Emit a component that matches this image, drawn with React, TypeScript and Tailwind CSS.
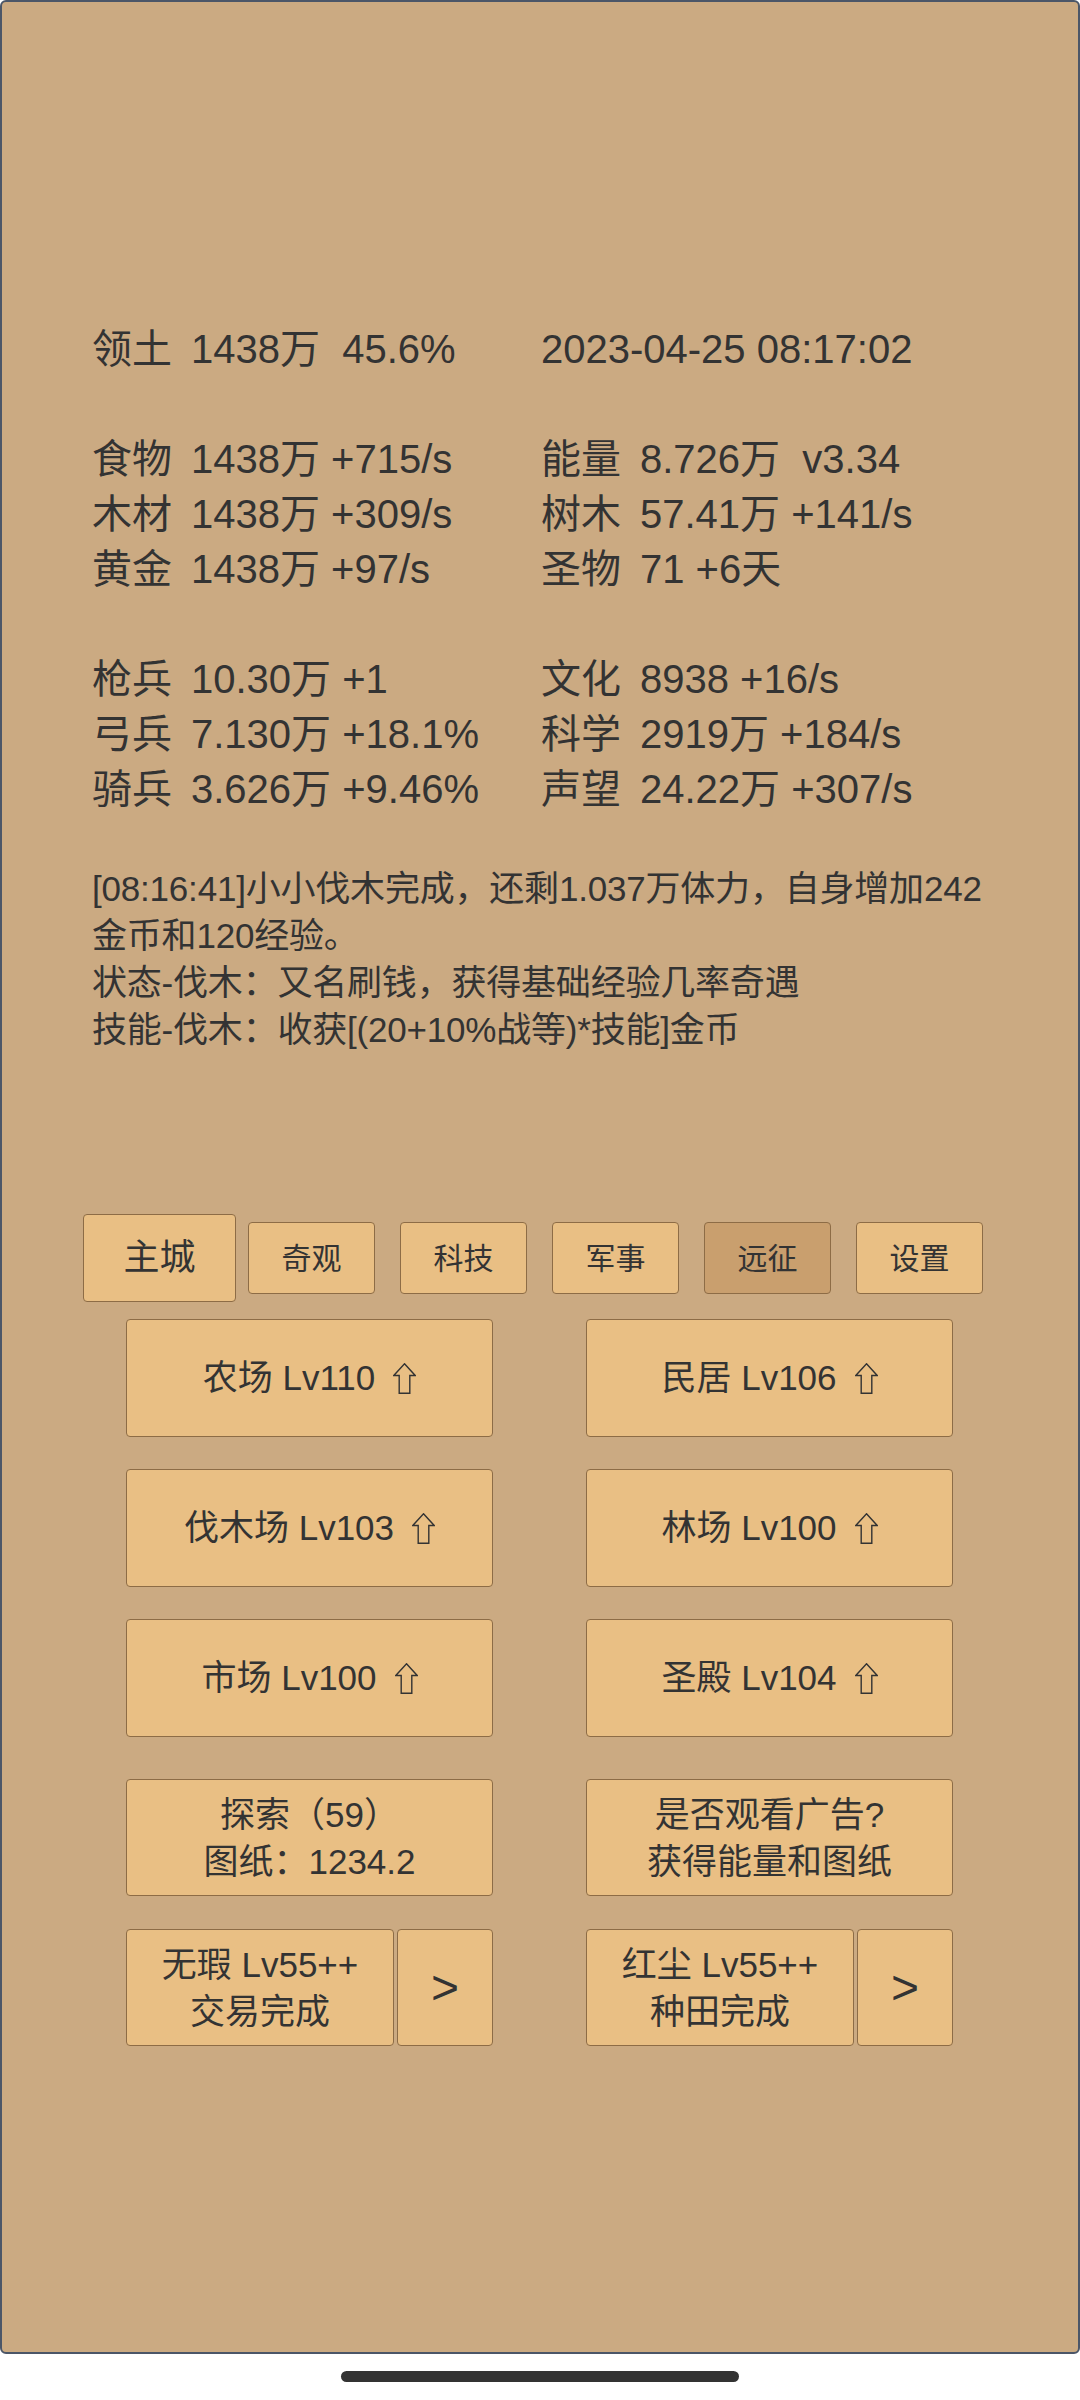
import React from 'react';

type Stat = { label: string; value: string } | null;

const rows: [Stat, Stat][] = [
  [{ label: '领土', value: '1438万  45.6%' }, { label: '', value: '2023-04-25 08:17:02' }],
  [null, null],
  [{ label: '食物', value: '1438万 +715/s' }, { label: '能量', value: '8.726万  v3.34' }],
  [{ label: '木材', value: '1438万 +309/s' }, { label: '树木', value: '57.41万 +141/s' }],
  [{ label: '黄金', value: '1438万 +97/s' }, { label: '圣物', value: '71 +6天' }],
  [null, null],
  [{ label: '枪兵', value: '10.30万 +1' }, { label: '文化', value: '8938 +16/s' }],
  [{ label: '弓兵', value: '7.130万 +18.1%' }, { label: '科学', value: '2919万 +184/s' }],
  [{ label: '骑兵', value: '3.626万 +9.46%' }, { label: '声望', value: '24.22万 +307/s' }],
];

const logLines = [
  '[08:16:41]小小伐木完成，还剩1.037万体力，自身增加242',
  '金币和120经验。',
  '状态-伐木：又名刷钱，获得基础经验几率奇遇',
  '技能-伐木：收获[(20+10%战等)*技能]金币',
];

const tabs = ['奇观', '科技', '军事', '远征', '设置'];

const buildings = [
  ['农场 Lv110', '民居 Lv106'],
  ['伐木场 Lv103', '林场 Lv100'],
  ['市场 Lv100', '圣殿 Lv104'],
];

const btnBase = 'border border-[#8d6c46] rounded-[4px] flex items-center justify-center';
const btn = `bg-[#e9bf84] ${btnBase}`;

function UpArrow() {
  return (
    <svg width="23" height="31" viewBox="0 0 23 31" className="ml-[18px] shrink-0">
      <path
        d="M11.5 0.8 L22.2 12.5 L16.8 12.5 L16.8 30.3 L6.2 30.3 L6.2 12.5 L0.8 12.5 Z"
        fill="none"
        stroke="#333"
        strokeWidth="1.4"
        strokeLinejoin="miter"
      />
    </svg>
  );
}

function StatCell({ s }: { s: Stat }) {
  if (!s) return <div className="h-[55px]" />;
  return (
    <div className="flex h-[55px] items-center whitespace-pre">
      {s.label && <span className="w-[99px] shrink-0">{s.label}</span>}
      <span>{s.value}</span>
    </div>
  );
}

export default function App() {
  return (
    <div className="w-[1080px] h-[2400px] bg-white flex flex-col font-['Liberation_Sans','Noto_Sans_CJK_SC',sans-serif] text-[#333]">
      <div className="h-[2354px] bg-[#cbaa82] border-2 border-[#4b5668] rounded-[6px] flex flex-col">
        {/* stats */}
        <div className="mt-[320px] pl-[90px] text-[40px] leading-[55px]">
          {rows.map((r, i) => (
            <div key={i} className="grid grid-cols-[449px_1fr]">
              <StatCell s={r[0]} />
              <StatCell s={r[1]} />
            </div>
          ))}
        </div>

        {/* log */}
        <div className="mt-[48px] pl-[90px] text-[35px] leading-[47px] tracking-[-0.2px]">
          {logLines.map((l, i) => (
            <div key={i} className="whitespace-nowrap">{l}</div>
          ))}
        </div>

        {/* tabs */}
        <div className="mt-[161px] pl-[81px] flex items-center">
          <div className={`${btn} w-[153px] h-[88px] text-[36px]`}>主城</div>
          <div className="flex gap-[25px] ml-[12px]">
            {tabs.map((t) => (
              <div
                key={t}
                className={`${t === '远征' ? 'bg-[#c99f6e]' : 'bg-[#e9bf84]'} ${btnBase} w-[127px] h-[72px] text-[30px]`}
              >
                {t}
              </div>
            ))}
          </div>
        </div>

        {/* buildings */}
        <div className="mt-[17px] pl-[124px] grid grid-cols-[367px_367px] gap-x-[93px] gap-y-[32px] text-[35px]">
          {buildings.flat().map((b) => (
            <div key={b} className={`${btn} h-[118px]`}>
              <span>{b}</span>
              <UpArrow />
            </div>
          ))}
        </div>

        <div className="mt-[42px] pl-[124px] grid grid-cols-[367px_367px] gap-x-[93px] text-[35px] leading-[47px]">
          <div className={`${btn} h-[117px] flex-col`}>
            <span>探索（59）</span>
            <span>图纸：1234.2</span>
          </div>
          <div className={`${btn} h-[117px] flex-col`}>
            <span>是否观看广告?</span>
            <span>获得能量和图纸</span>
          </div>
        </div>

        <div className="mt-[33px] pl-[124px] grid grid-cols-[367px_367px] gap-x-[93px] text-[35px] leading-[47px]">
          {[
            ['无瑕 Lv55++', '交易完成'],
            ['红尘 Lv55++', '种田完成'],
          ].map(([a, b]) => (
            <div key={a} className="flex gap-[3px]">
              <div className={`${btn} w-[268px] h-[117px] flex-col`}>
                <span>{a}</span>
                <span>{b}</span>
              </div>
              <div className={`${btn} flex-1 h-[117px] text-[48px]`}>&gt;</div>
            </div>
          ))}
        </div>
      </div>
      <div className="flex-1 flex justify-center pt-[17px]">
        <div className="w-[398px] h-[11px] rounded-full bg-[#333]" />
      </div>
    </div>
  );
}
